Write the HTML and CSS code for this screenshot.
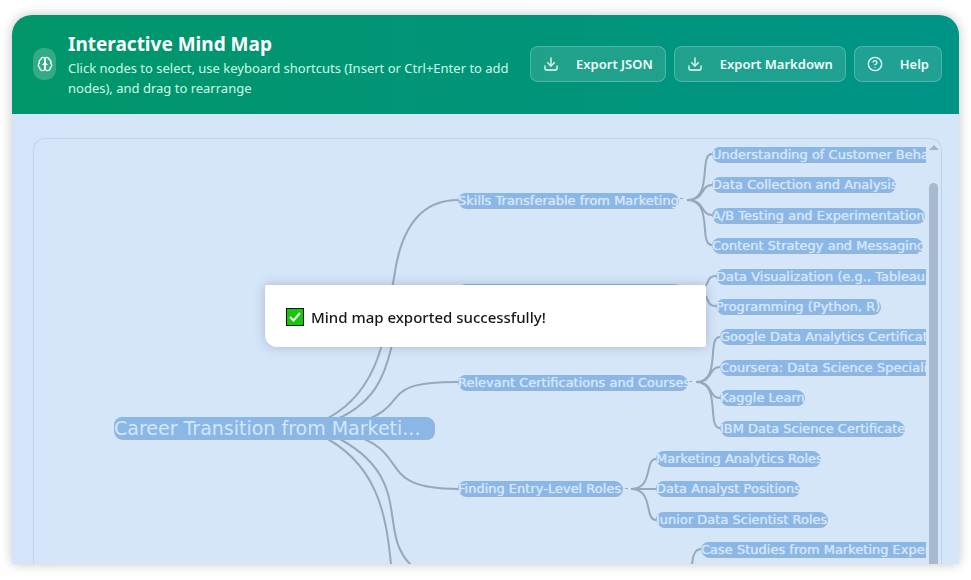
FILE: index.html
```html
<!DOCTYPE html>
<html lang="en">
<head>
<meta charset="utf-8">
<meta name="viewport" content="width=device-width, initial-scale=1">
<title>Interactive Mind Map</title>
<link rel="stylesheet" href="styles.css">
</head>
<body>
<main class="card">
  <header class="header">
    <span class="logo">
      <svg class="icon" viewBox="0 0 24 24" aria-hidden="true"><path d="M12 5a3 3 0 1 0-5.997.125 4 4 0 0 0-2.526 5.77 4 4 0 0 0 .556 6.588A4 4 0 1 0 12 18Z"/><path d="M12 5a3 3 0 1 1 5.997.125 4 4 0 0 1 2.526 5.77 4 4 0 0 1-.556 6.588A4 4 0 1 1 12 18Z"/><path d="M15 13a4.5 4.5 0 0 1-3-4 4.5 4.5 0 0 1-3 4"/></svg>
    </span>
    <div class="heading">
      <h1>Interactive Mind Map</h1>
      <p>Click nodes to select, use keyboard shortcuts (Insert or Ctrl+Enter to add nodes), and drag to rearrange</p>
    </div>
    <div class="actions">
      <button type="button" class="btn"><svg class="icon" viewBox="0 0 24 24" aria-hidden="true"><path d="M21 15v4a2 2 0 0 1-2 2H5a2 2 0 0 1-2-2v-4"/><path d="m7 10 5 5 5-5"/><path d="M12 15V3"/></svg>Export JSON</button>
      <button type="button" class="btn"><svg class="icon" viewBox="0 0 24 24" aria-hidden="true"><path d="M21 15v4a2 2 0 0 1-2 2H5a2 2 0 0 1-2-2v-4"/><path d="m7 10 5 5 5-5"/><path d="M12 15V3"/></svg>Export Markdown</button>
      <button type="button" class="btn"><svg class="icon" viewBox="0 0 24 24" aria-hidden="true"><circle cx="12" cy="12" r="10"/><path d="M9.09 9a3 3 0 0 1 5.83 1c0 2-3 3-3 3"/><path d="M12 17h.01"/></svg>Help</button>
    </div>
  </header>
  <section class="stage">
    <div class="board">
      <div class="canvas">
        <svg class="links" viewBox="34 139 892 441" aria-hidden="true">
          <path d="M320 422C388 392 386 315 394 278C400 232 418 200 458 200"/>
          <path d="M330 422C375 405 385 375 392 345C400 305 418 291 458 291"/>
          <path d="M355 424C417 405 372 382 458 382"/>
          <path d="M350 434C414 452 373 489 458 489"/>
          <path d="M330 434C417 475 376 530 410 564L430 580"/>
          <path d="M318 434C378 462 386 515 391 564L393 580"/>
          <path d="M687 200C714 200 698 154 712 154M687 200C706 200 700 185 712 185M687 200C706 200 700 215 712 215M687 200C714 200 698 245 712 245"/>
          <path d="M690 291C715 291 702 276 716 276M690 291C715 291 702 306 716 306"/>
          <path d="M696 382C722 382 706 337 720 337M696 382C714 382 708 367 720 367M696 382C714 382 708 398 720 398M696 382C722 382 706 428 720 428"/>
          <path d="M631 489C654 489 644 459 656 459M631 489H656M631 489C654 489 644 520 656 520"/>
          <path d="M691 580C692 558 693 549 701 549"/>
          <path class="stub" d="M680 198.500h3M689 381.500h3M625 488.500h3"/>
        </svg>
        <span class="node root">Career Transition from Marketi...</span>
        <span class="node skills">Skills Transferable from Marketing</span>
        <span class="node tools"></span>
        <span class="node courses">Relevant Certifications and Courses</span>
        <span class="node entry">Finding Entry-Level Roles</span>
        <span class="node behavior">Understanding of Customer Behavior</span>
        <span class="node collection">Data Collection and Analysis</span>
        <span class="node testing">A/B Testing and Experimentation</span>
        <span class="node content">Content Strategy and Messaging</span>
        <span class="node visual">Data Visualization (e.g., Tableau,</span>
        <span class="node programming">Programming (Python, R)</span>
        <span class="node google">Google Data Analytics Certificate</span>
        <span class="node coursera">Coursera: Data Science Specialization</span>
        <span class="node kaggle">Kaggle Learn</span>
        <span class="node ibm">IBM Data Science Certificate</span>
        <span class="node analytics">Marketing Analytics Roles</span>
        <span class="node analyst">Data Analyst Positions</span>
        <span class="node junior">Junior Data Scientist Roles</span>
        <span class="node cases">Case Studies from Marketing Experience</span>
      </div>
      <div class="scrollbar" aria-hidden="true"><span class="arrow"></span><span class="thumb"></span></div>
    </div>
  </section>
</main>
<div class="toast" role="status">
  <svg class="check" viewBox="0 0 18 18" aria-hidden="true"><rect x=".5" y=".5" width="17" height="17"/><path d="m4 9 3.500 3.500L14 5"/></svg>
  <span>Mind map exported successfully!</span>
</div>
</body>
</html>
```
FILE: styles.css
```css
* { box-sizing: border-box; }

body {
  margin: 0;
  height: 100vh;
  padding: 15px 12px 16px;
  display: flex;
  overflow: hidden;
  background: #fff;
  font-family: "Noto Sans", "Open Sans", sans-serif;
}

.card {
  flex: 1;
  min-width: 0;
  display: flex;
  flex-direction: column;
  border-radius: 20px 20px 0 0;
  overflow: hidden;
  background: #d5e6f9;
  box-shadow: 0 0 12px rgba(0, 0, 0, .24);
}

.header {
  display: flex;
  align-items: center;
  gap: 12px;
  padding: 14px 17px 16px 21px;
  min-height: 99px;
  background: linear-gradient(90deg, #009669, #009487);
  color: #fff;
}

.logo {
  flex: none;
  display: flex;
  align-items: center;
  justify-content: center;
  width: 23px;
  height: 32px;
  border-radius: 10px;
  background: rgba(255, 255, 255, .2);
}

.icon {
  flex: none;
  width: 16px;
  height: 16px;
  fill: none;
  stroke: currentColor;
  stroke-width: 2;
  stroke-linecap: round;
  stroke-linejoin: round;
}

.heading { flex: 1; min-width: 0; }

h1 {
  margin: 0;
  font-size: 19px;
  line-height: 28px;
  font-weight: 700;
}

.heading p {
  margin: 0;
  font-size: 13px;
  line-height: 20px;
  color: #d0fae5;
}

.actions { display: flex; gap: 8px; }

.btn {
  display: flex;
  align-items: center;
  gap: 17px;
  height: 36px;
  padding: 0 12px;
  border: 1px solid rgba(255, 255, 255, .22);
  border-radius: 8px;
  background: rgba(255, 255, 255, .12);
  color: #f0fdf8;
  font: 600 13px/20px "Noto Sans", "Open Sans", sans-serif;
  white-space: nowrap;
}

.stage {
  flex: 1;
  min-height: 0;
  display: flex;
  padding: 24px 17px 0 21px;
  background: linear-gradient(90deg, #d4e5fb, #d5e6f9 80px);
}

.board {
  flex: 1;
  min-width: 0;
  display: flex;
  border: 1px solid #c3d4ea;
  border-bottom: 0;
  border-radius: 12px 12px 0 0;
}

.canvas {
  position: relative;
  flex: 1;
  min-width: 0;
  overflow: hidden;
}

.links {
  position: absolute;
  left: 0;
  top: 0;
  width: 892px;
  height: 441px;
  fill: none;
  stroke: #98a8bb;
  stroke-width: 2;
}

.stub { stroke-width: 1; }

.node {
  position: absolute;
  height: 15px;
  border-radius: 8px;
  background: #8ab7e5;
  box-shadow: 1px 1px 0 #9eb2cb;
  color: #d5e6f9;
  font: 13px/15px "DejaVu Sans", sans-serif;
  text-shadow: 0 0 1px #d5e6f9;
  white-space: nowrap;
}

.root { left: 80px; top: 278px; width: 320px; height: 22px; font-size: 19px; line-height: 22px; text-shadow: none; }
.skills { left: 424px; top: 54px; width: 220px; }
.tools { left: 424px; top: 145px; width: 224px; }
.courses { left: 424px; top: 236px; width: 229px; }
.entry { left: 424px; top: 342px; width: 164px; }
.behavior { left: 678px; top: 8px; }
.collection { left: 678px; top: 38px; width: 183px; }
.testing { left: 678px; top: 69px; width: 212px; }
.content { left: 678px; top: 99px; width: 210px; }
.visual { left: 682px; top: 130px; width: 320px; }
.programming { left: 682px; top: 160px; width: 164px; }
.google { left: 686px; top: 190px; }
.coursera { left: 686px; top: 221px; }
.kaggle { left: 686px; top: 251px; width: 84px; }
.ibm { left: 686px; top: 282px; width: 184px; }
.analytics { left: 622px; top: 312px; width: 164px; }
.analyst { left: 622px; top: 342px; width: 143px; }
.junior { left: 622px; top: 373px; width: 171px; }
.cases { left: 667px; top: 403px; }

.scrollbar {
  flex: none;
  display: flex;
  flex-direction: column;
  align-items: center;
  gap: 33px;
  width: 15px;
  padding-top: 6px;
}

.arrow {
  border: 5px solid transparent;
  border-top: 0;
  border-bottom: 5px solid #a3b3c8;
}

.thumb {
  flex: 1;
  width: 9px;
  border-radius: 5px 5px 0 0;
  background: #a7b9cf;
}

.toast {
  position: fixed;
  left: 0;
  right: 0;
  top: 285px;
  margin: 0 auto;
  display: flex;
  align-items: center;
  gap: 7px;
  width: 441px;
  min-height: 62px;
  padding: 2px 21px 0;
  border-radius: 2px 2px 2px 12px;
  background: #fff;
  box-shadow: 0 0 12px rgba(60, 80, 120, .3);
  color: #171717;
  font-size: 15px;
  font-weight: 500;
  line-height: 24px;
}

.check { width: 18px; height: 18px; fill: #16c60c; stroke: #111; }
.check path { fill: none; stroke: #fff; stroke-width: 2; }
```
